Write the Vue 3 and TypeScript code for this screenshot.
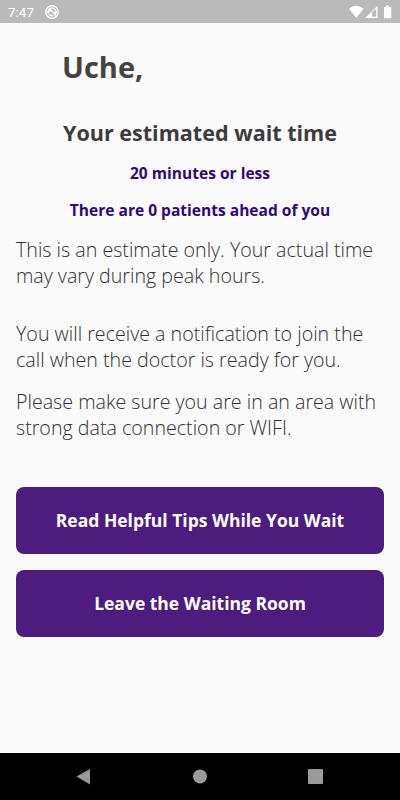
<script setup lang="ts">
const name: string = 'Uche'
const patientsAhead: number = 0
</script>

<template>
  <div class="screen">
    <header class="status">
      <span class="clock">7:47</span>
      <svg class="app-mark" viewBox="0 0 16 16"><circle cx="8" cy="8" r="6.2" fill="none" stroke="#fff" stroke-width="1.4" /><path d="M4.7 9.8A3.8 3.8 0 1 1 10.8 10.6M5 7l2.2-.7 4.9 5.5M5.2 10.4A3.8 3.8 0 0 0 9.5 11.4" fill="none" stroke="#fff" stroke-width="1.5" /></svg>
      <svg class="signals" viewBox="0 0 46 16"><path d="M0 4.8Q7.3-1.2 14.6 4.8L7.3 13.8Z" fill="#fff" /><path d="M28.5 1.8V14H16.2Z" fill="#fff" /><path d="M27.2 7V12.7H23V8.4L27.2 4.8Z" fill="#bababa" /><path d="M35 3h2V1.5h3.2V3h2.1v11.2H35Z" fill="#fff" /></svg>
    </header>
    <main>
      <h1>{{ name }},</h1>
      <h2>Your estimated wait time</h2>
      <p class="fact wait">20 minutes or less</p>
      <p class="fact queue">There are {{ patientsAhead }} patients ahead of you</p>
      <p class="body estimate">This is an estimate only. Your actual time<br />may vary during peak hours.</p>
      <p class="body notice">You will receive a notification to join the<br />call when the doctor is ready for you.</p>
      <p class="body area">Please make sure you are in an area with<br />strong data connection or WIFI.</p>
      <div class="actions">
        <button>Read Helpful Tips While You Wait</button>
        <button>Leave the Waiting Room</button>
      </div>
    </main>
    <nav>
      <svg viewBox="0 0 400 47"><path d="M76.5 23.5 90 16V31.5Z" /><circle cx="200" cy="23.5" r="7" /><rect x="308" y="16" width="15" height="15" rx="1" /></svg>
    </nav>
  </div>
</template>

<style>
body { margin: 0; }
</style>
<style scoped>
.screen { width: 400px; height: 800px; display: flex; flex-direction: column; overflow: hidden; background: #fafafa; font-family: "Open Sans", sans-serif; }
.status { height: 23px; flex: none; display: flex; align-items: center; padding: 0 6px 0 8px; box-sizing: border-box; background: #bababa; color: #fff; }
.clock { padding-top: 2px; font: 13.5px/21px Roboto, sans-serif; }
.app-mark { width: 16px; height: 16px; margin-left: 10px; }
.signals { width: 46px; height: 16px; margin-left: auto; margin-right: -1px; }
main { flex: 1; padding: 0 16px; display: flex; flex-direction: column; }
h1, h2, p { margin: 0; white-space: nowrap; }
h1 { margin: 23px 0 0 46px; font-size: 29px; line-height: 42px; color: #444; }
h2 { margin-top: 30px; font-size: 21.55px; line-height: 30px; text-align: center; color: #3c3c3c; }
.fact { font-size: 15.55px; line-height: 22px; font-weight: 700; text-align: center; color: #30087a; }
.wait { margin-top: 14px; }
.queue { margin-top: 15px; }
.body { font-size: 19.65px; line-height: 26px; font-weight: 300; color: #303030; }
.estimate { margin-top: 16px; }
.notice { margin-top: 32px; }
.area { margin-top: 16px; }
.actions { display: flex; flex-direction: column; gap: 16px; margin-top: 46px; }
button { height: 67px; padding: 0 6px 1px; border: 0; border-radius: 8px; background: #4c1c7e; color: #fff; font: 700 17.5px/24px "Open Sans", sans-serif; }
nav { height: 47px; flex: none; background: #000; }
nav svg { display: block; width: 400px; height: 47px; fill: #9a9a9a; }
</style>
